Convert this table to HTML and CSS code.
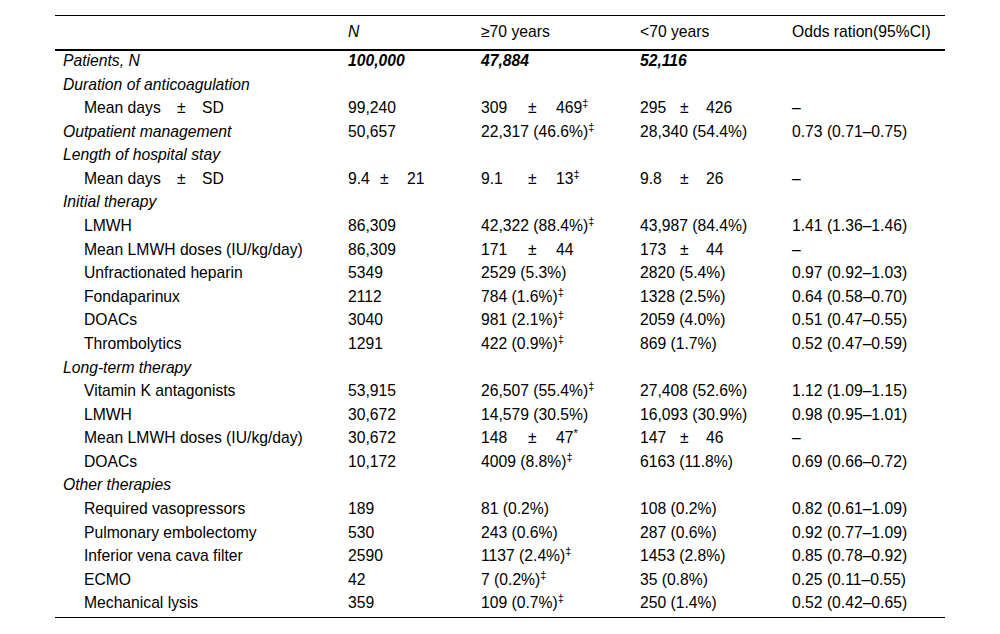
FILE: index.html
```html
<!DOCTYPE html>
<html>
<head>
<meta charset="utf-8">
<link rel="stylesheet" href="styles.css">
</head>
<body>
<table class="tbl">
  <colgroup>
    <col class="c-label"><col class="c-n"><col class="c-old"><col class="c-young"><col class="c-or">
  </colgroup>
  <thead>
    <tr><th></th><th><i>N</i></th><th>≥70 years</th><th>&lt;70 years</th><th>Odds ration(95%CI)</th></tr>
  </thead>
  <tbody>
    <tr class="strong"><td class="sec">Patients, N</td><td>100,000</td><td>47,884</td><td>52,116</td><td></td></tr>
    <tr><td class="sec">Duration of anticoagulation</td><td></td><td></td><td></td><td></td></tr>
    <tr><td class="item"><span class="pmw pl"><span class="a">Mean days</span><span class="pm">±</span>SD</span></td><td>99,240</td><td><span class="pmw po"><span class="a">309</span><span class="pm">±</span>469<sup>‡</sup></span></td><td><span class="pmw py"><span class="a">295</span><span class="pm">±</span>426</span></td><td>–</td></tr>
    <tr><td class="sec">Outpatient management</td><td>50,657</td><td>22,317 (46.6%)<sup>‡</sup></td><td>28,340 (54.4%)</td><td>0.73 (0.71–0.75)</td></tr>
    <tr><td class="sec">Length of hospital stay</td><td></td><td></td><td></td><td></td></tr>
    <tr><td class="item"><span class="pmw pl"><span class="a">Mean days</span><span class="pm">±</span>SD</span></td><td><span class="pmw pn"><span class="a">9.4</span><span class="pm">±</span>21</span></td><td><span class="pmw po"><span class="a">9.1</span><span class="pm">±</span>13<sup>‡</sup></span></td><td><span class="pmw py"><span class="a">9.8</span><span class="pm">±</span>26</span></td><td>–</td></tr>
    <tr><td class="sec">Initial therapy</td><td></td><td></td><td></td><td></td></tr>
    <tr><td class="item">LMWH</td><td>86,309</td><td>42,322 (88.4%)<sup>‡</sup></td><td>43,987 (84.4%)</td><td>1.41 (1.36–1.46)</td></tr>
    <tr><td class="item">Mean LMWH doses (IU/kg/day)</td><td>86,309</td><td><span class="pmw po"><span class="a">171</span><span class="pm">±</span>44</span></td><td><span class="pmw py"><span class="a">173</span><span class="pm">±</span>44</span></td><td>–</td></tr>
    <tr><td class="item">Unfractionated heparin</td><td>5349</td><td>2529 (5.3%)</td><td>2820 (5.4%)</td><td>0.97 (0.92–1.03)</td></tr>
    <tr><td class="item">Fondaparinux</td><td>2112</td><td>784 (1.6%)<sup>‡</sup></td><td>1328 (2.5%)</td><td>0.64 (0.58–0.70)</td></tr>
    <tr><td class="item">DOACs</td><td>3040</td><td>981 (2.1%)<sup>‡</sup></td><td>2059 (4.0%)</td><td>0.51 (0.47–0.55)</td></tr>
    <tr><td class="item">Thrombolytics</td><td>1291</td><td>422 (0.9%)<sup>‡</sup></td><td>869 (1.7%)</td><td>0.52 (0.47–0.59)</td></tr>
    <tr><td class="sec">Long-term therapy</td><td></td><td></td><td></td><td></td></tr>
    <tr><td class="item">Vitamin K antagonists</td><td>53,915</td><td>26,507 (55.4%)<sup>‡</sup></td><td>27,408 (52.6%)</td><td>1.12 (1.09–1.15)</td></tr>
    <tr><td class="item">LMWH</td><td>30,672</td><td>14,579 (30.5%)</td><td>16,093 (30.9%)</td><td>0.98 (0.95–1.01)</td></tr>
    <tr><td class="item">Mean LMWH doses (IU/kg/day)</td><td>30,672</td><td><span class="pmw po"><span class="a">148</span><span class="pm">±</span>47<sup>*</sup></span></td><td><span class="pmw py"><span class="a">147</span><span class="pm">±</span>46</span></td><td>–</td></tr>
    <tr><td class="item">DOACs</td><td>10,172</td><td>4009 (8.8%)<sup>‡</sup></td><td>6163 (11.8%)</td><td>0.69 (0.66–0.72)</td></tr>
    <tr><td class="sec">Other therapies</td><td></td><td></td><td></td><td></td></tr>
    <tr><td class="item">Required vasopressors</td><td>189</td><td>81 (0.2%)</td><td>108 (0.2%)</td><td>0.82 (0.61–1.09)</td></tr>
    <tr><td class="item">Pulmonary embolectomy</td><td>530</td><td>243 (0.6%)</td><td>287 (0.6%)</td><td>0.92 (0.77–1.09)</td></tr>
    <tr><td class="item">Inferior vena cava filter</td><td>2590</td><td>1137 (2.4%)<sup>‡</sup></td><td>1453 (2.8%)</td><td>0.85 (0.78–0.92)</td></tr>
    <tr><td class="item">ECMO</td><td>42</td><td>7 (0.2%)<sup>‡</sup></td><td>35 (0.8%)</td><td>0.25 (0.11–0.55)</td></tr>
    <tr><td class="item">Mechanical lysis</td><td>359</td><td>109 (0.7%)<sup>‡</sup></td><td>250 (1.4%)</td><td>0.52 (0.42–0.65)</td></tr>
  </tbody>
</table>
</body>
</html>
```

FILE: styles.css
```css
html, body {
  margin: 0;
  padding: 0;
  background: #fff;
}
body {
  font-family: "Liberation Sans", Arial, sans-serif;
  font-size: 15.7px;
  color: #000;
  padding: 15px 0 0 55px;
}
.tbl {
  border-collapse: collapse;
  table-layout: fixed;
  width: 890px;
  border-top: 1px solid #000;
  border-bottom: 1px solid #000;
}
.c-label { width: 285px; }
.c-n { width: 133px; }
.c-old { width: 159px; }
.c-young { width: 152px; }
.c-or { width: 161px; }

.tbl th {
  font-weight: normal;
  text-align: left;
  height: 31px;
  padding: 0 8px 2px;
  line-height: 16px;
  border-bottom: 2px solid #000;
  vertical-align: middle;
}
.tbl td {
  padding: 2px 8px 6px;
  line-height: 15.58px;
  height: 15.58px;
  white-space: nowrap;
  vertical-align: middle;
}
.tbl td.sec {
  font-style: italic;
}
.tbl td.item {
  padding-left: 29px;
}
.strong td:not(.sec) {
  font-weight: bold;
  font-style: italic;
}
sup {
  font-size: 11px;
  line-height: 0;
  vertical-align: 6px;
}
.pmw .a {
  display: inline-block;
}
.pmw .pm {
  display: inline-block;
}
.pl .a { width: 93px; }
.pl .pm { width: 25px; }
.pn .a { width: 32px; }
.pn .pm { width: 27px; }
.po .a { width: 47px; }
.po .pm { width: 28px; }
.py .a { width: 40px; }
.py .pm { width: 26px; }
```
